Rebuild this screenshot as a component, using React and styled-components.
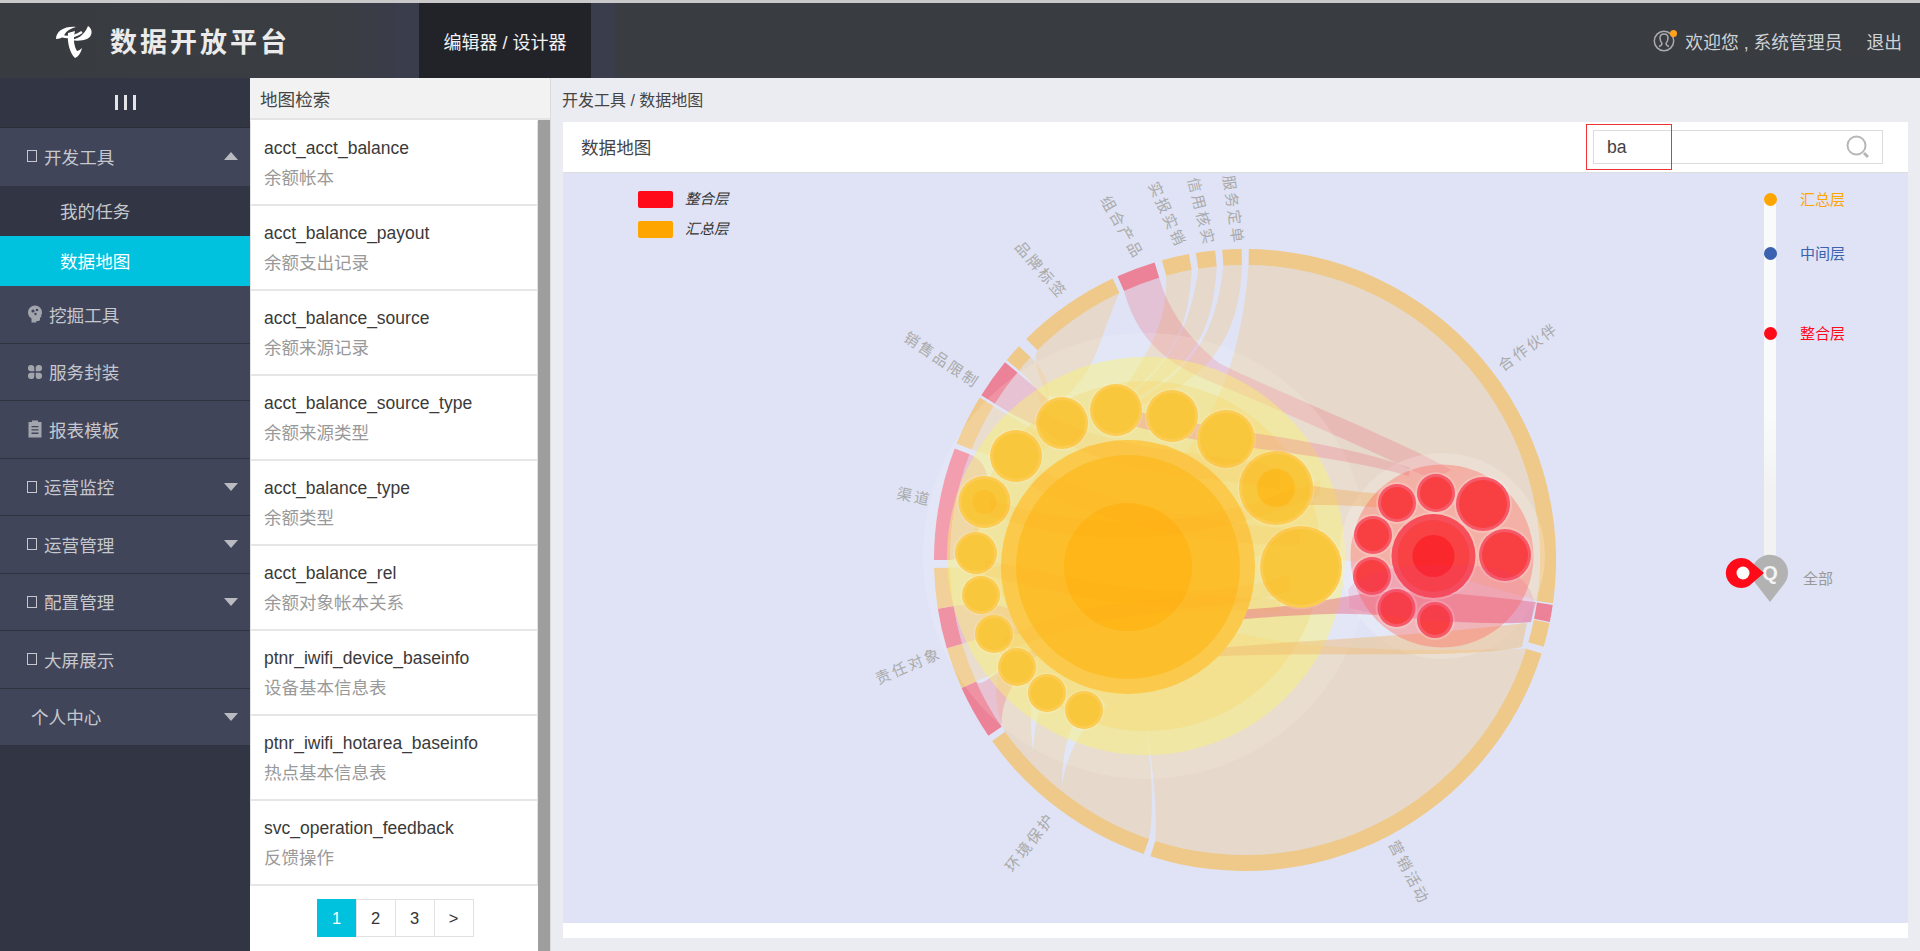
import React from "react";
import styled, { createGlobalStyle } from "styled-components";

const FONT = `"Liberation Sans", "Noto Sans CJK SC", sans-serif`;

const GlobalStyle = createGlobalStyle`
  html, body {
    margin: 0;
    height: 100%;
    overflow: hidden;
    font-family: ${FONT};
  }
  * { box-sizing: border-box; }
`;

const NAV = [
  { label: "挖掘工具", icon: "head" },
  { label: "服务封装", icon: "clover" },
  { label: "报表模板", icon: "clipboard" },
  { label: "运营监控", icon: "box", arrow: true },
  { label: "运营管理", icon: "box", arrow: true },
  { label: "配置管理", icon: "box", arrow: true },
  { label: "大屏展示", icon: "box" },
  { label: "个人中心", arrow: true },
];

const TABLES = [
  ["acct_acct_balance", "余额帐本"],
  ["acct_balance_payout", "余额支出记录"],
  ["acct_balance_source", "余额来源记录"],
  ["acct_balance_source_type", "余额来源类型"],
  ["acct_balance_type", "余额类型"],
  ["acct_balance_rel", "余额对象帐本关系"],
  ["ptnr_iwifi_device_baseinfo", "设备基本信息表"],
  ["ptnr_iwifi_hotarea_baseinfo", "热点基本信息表"],
  ["svc_operation_feedback", "反馈操作"],
];

// chart geometry, in page coordinates (the svg viewBox starts at the chart corner)
const CX = 1245;
const CY = 560;
const R_IN = 295;
const R_OUT = 311;

const polar = (r, deg) => {
  const t = (deg * Math.PI) / 180;
  return [CX + r * Math.sin(t), CY - r * Math.cos(t)];
};
const p = (pair) => `${pair[0].toFixed(1)} ${pair[1].toFixed(1)}`;

const ringPath = (a, b) => {
  const large = b - a > 180 ? 1 : 0;
  return `M${p(polar(R_OUT, a))} A${R_OUT} ${R_OUT} 0 ${large} 1 ${p(polar(R_OUT, b))} L${p(polar(R_IN, b))} A${R_IN} ${R_IN} 0 ${large} 0 ${p(polar(R_IN, a))} Z`;
};

const ribbon = (a, b, tx, ty, w = 6, k = 0.5) =>
  `M${p(polar(R_IN, a))} A${R_IN} ${R_IN} 0 0 1 ${p(polar(R_IN, b))} Q${p(polar(R_IN * k, b))} ${tx} ${ty + w / 2} L${tx} ${ty - w / 2} Q${p(polar(R_IN * k, a))} ${p(polar(R_IN, a))} Z`;

const O = "#efc98a";
const R = "#ec8297";
const RING = [
  [0.7, 98, O], [98.3, 101.5, R], [101.7, 106.2, O], [107.5, 197.7, O],
  [199, 234.4, O], [235.6, 245.7, R], [245.7, 253.5, O], [253.5, 261, R],
  [261, 268.5, O], [270, 291, "#f090a4"], [292, 301.5, O], [302, 309.5, R],
  [310, 313.4, O], [315.3, 334.8, O], [335.8, 343.1, R], [344.5, 349.6, O],
  [350.9, 354.5, O], [355.8, 359.4, O],
];

const TAN = "rgba(239,201,138,0.4)";
const PINK = "rgba(238,106,133,0.35)";

const CHORDS = [
  [`M${p(polar(R_IN, 0.7))} A${R_IN} ${R_IN} 0 0 1 ${p(polar(R_IN, 98))} C1450 572 1330 545 1150 560 L1130 530 C1195 440 1238 400 ${p(polar(R_IN, 0.7))} Z`, TAN],
  [`M${p(polar(R_IN, 107.5))} A${R_IN} ${R_IN} 0 0 1 ${p(polar(R_IN, 197.7))} C1159 795 1146 720 1128 600 L1150 590 C1200 640 1310 655 ${p(polar(R_IN, 107.5))} Z`, TAN],
  [`M${p(polar(R_IN, 199))} A${R_IN} ${R_IN} 0 0 1 ${p(polar(R_IN, 234.4))} C985 690 1000 640 1040 610 L1128 590 C1144 700 1158 790 ${p(polar(R_IN, 199))} Z`, TAN],
  [ribbon(245.7, 253.5, 1010, 640, 10), TAN],
  [ribbon(261, 268.5, 1000, 570, 10), TAN],
  [ribbon(292, 301.5, 1062, 440, 10, 0.8), TAN],
  [ribbon(310, 313.4, 1016, 456, 6, 0.8), TAN],
  [`M${p(polar(R_IN, 315.3))} A${R_IN} ${R_IN} 0 0 1 ${p(polar(R_IN, 334.8))} C1098 340 1098 370 1062 400 L1048 395 C1040 380 1032 360 ${p(polar(R_IN, 315.3))} Z`, TAN],
  [`M${p(polar(R_IN, 344.5))} A${R_IN} ${R_IN} 0 0 1 ${p(polar(R_IN, 349.6))} C1188 330 1175 360 1110 410 C1155 345 1167 320 ${p(polar(R_IN, 344.5))} Z`, TAN],
  [`M${p(polar(R_IN, 350.9))} A${R_IN} ${R_IN} 0 0 1 ${p(polar(R_IN, 354.5))} C1212 340 1190 370 1115 410 C1170 365 1190 330 ${p(polar(R_IN, 350.9))} Z`, TAN],
  [`M${p(polar(R_IN, 355.8))} A${R_IN} ${R_IN} 0 0 1 ${p(polar(R_IN, 359.4))} C1240 330 1215 385 1120 412 C1185 375 1215 345 ${p(polar(R_IN, 355.8))} Z`, TAN],
  [ribbon(270, 291, 985, 505, 24, 0.9), PINK],
  [ribbon(253.5, 261, 1040, 660, 6, 0.7), PINK],
  [`M${p(polar(R_IN, 235.6))} A${R_IN} ${R_IN} 0 0 1 ${p(polar(R_IN, 245.7))} C985 690 1000 660 1090 620 C1030 650 1000 690 ${p(polar(R_IN, 235.6))} Z`, PINK],
  [ribbon(302, 309.5, 1062, 425, 8, 0.75), PINK],
  [`M${p(polar(R_IN, 335.8))} A${R_IN} ${R_IN} 0 0 1 ${p(polar(R_IN, 343.1))} C1168 310 1190 340 1219 363 C1260 385 1400 440 1451 470 L1433 480 C1380 455 1280 410 1224 387 C1180 370 1140 350 ${p(polar(R_IN, 335.8))} Z`, "rgba(238,106,133,0.28)"],
];

const SLITS = [
  "M1033 752 C1030 725 1030 700 1036 680 L1046 690 C1036 715 1034 735 1033 752 Z",
  "M1062 785 C1062 745 1072 715 1096 695 L1108 705 C1082 725 1068 750 1062 785 Z",
];

const SMALL = [
  [1062, 423, 26], [1116, 410, 26], [1172, 416, 26], [1226, 439, 29], [1276, 488, 37],
  [1301, 567, 41], [1016, 456, 26], [984.5, 502, 26], [976, 553, 21], [981, 595, 19],
  [994, 634, 19], [1017, 667, 19], [1047, 693, 19], [1084, 710, 19],
];

const REDS = [
  [1436, 493, 19], [1397, 503, 19], [1483, 504, 27], [1505, 555, 26],
  [1373, 535, 19], [1372, 576, 19], [1396.5, 608, 19], [1435, 620, 18],
];

// thin ribbons between the two groups, hidden behind the circles at their ends
const BANDS_UNDER = [
  ["M1116 405 C1190 430 1320 435 1410 468 L1409 476 C1310 448 1190 448 1116 420 Z", "rgba(238,106,133,0.28)"],
  ["M1290 482 C1335 490 1360 492 1385 494 L1385 508 C1350 505 1330 505 1290 505 Z", "rgba(240,170,90,0.4)"],
  ["M1527 623 L1522 647 C1450 660 1340 650 1200 657 L1120 665 C1200 640 1340 645 1527 623 Z", "rgba(240,185,110,0.45)"],
  ["M1536 602 L1531 622 C1460 628 1400 612 1330 614 C1290 615 1260 618 1200 622 L1200 610 C1290 612 1340 595 1380 592 C1430 590 1480 596 1536 602 Z", "rgba(232,90,125,0.42)"],
];

// streaks that cross the yellow circles
const BANDS_OVER = [
  ["M1320 480 C1220 520 1120 540 990 500 L990 515 C1120 560 1230 530 1320 495 Z", "rgba(250,165,25,0.09)"],
  ["M1290 575 C1180 610 1090 580 985 560 L985 575 C1090 600 1190 625 1290 590 Z", "rgba(250,165,25,0.09)"],
  ["M1300 530 C1180 520 1100 500 1040 470 L1030 485 C1100 520 1180 545 1300 545 Z", "rgba(250,165,25,0.08)"],
  ["M1000 640 C1080 600 1180 590 1280 600 L1280 612 C1180 605 1090 615 1010 650 Z", "rgba(250,165,25,0.08)"],
  ["M1040 410 C1120 460 1240 450 1280 470 L1280 490 C1220 475 1110 480 1036 425 Z", "rgba(250,165,25,0.08)"],
];

const LABELS = [
  ["服务定单", 1232, 210, 82],
  ["信用核实", 1200, 212, 76],
  ["实报实销", 1166, 215, 66],
  ["组合产品", 1121, 228, 60],
  ["品牌标签", 1040, 271, 49],
  ["销售品限制", 941, 361, 34],
  ["渠道", 914, 498, 12],
  ["责任对象", 909, 667, -23],
  ["环境保护", 1031, 843, -52],
  ["营销活动", 1408, 873, 62],
  ["合作伙伴", 1529, 348, -36],
];

const STOPS = [
  { label: "汇总层", color: "#ffa500", top: 0 },
  { label: "中间层", color: "#3a62b0", top: 54 },
  { label: "整合层", color: "#ff0a19", top: 134 },
];

const NavIcon = ({ kind }) => {
  if (kind === "box") return <Tofu />;
  if (kind === "head") {
    return (
      <IconSvg viewBox="0 0 16 18">
        <path d="M8 0.5a7 7 0 0 1 7 7c0 1.4-.3 2-1 3l.6 1.5-1.6.6v2a1.3 1.3 0 0 1-1.3 1.3H9.4V17.5H4.5v-4C2.300 12 1 10 1 7.500a7 7 0 0 1 7-7z" fill="#a3a5ad" />
        <circle cx="6" cy="6" r="1.600" fill="#41455a" />
        <circle cx="10" cy="5" r="1.300" fill="#41455a" />
        <circle cx="8.500" cy="9" r="1.200" fill="#41455a" />
      </IconSvg>
    );
  }
  if (kind === "clover") {
    return (
      <IconSvg viewBox="0 0 16 16">
        <path d="M7.300 7.300H3.800a3.200 3.200 0 1 1 3.500-3.500zM8.700 7.300V3.800a3.200 3.200 0 1 1 3.500 3.500zM7.300 8.700v3.500a3.200 3.200 0 1 1-3.500-3.500zM8.700 8.700h3.500a3.200 3.200 0 1 1-3.500 3.500z" fill="#a3a5ad" />
      </IconSvg>
    );
  }
  return (
    <IconSvg viewBox="0 0 16 18">
      <path d="M1.500 2H5V0.500h6V2h3.500v15.500h-13zM4.500 6v1.300h7V6zM4.500 9.300v1.300h7V9.300zM4.500 12.600v1.300h7v-1.300z" fill="#a3a5ad" fillRule="evenodd" />
    </IconSvg>
  );
};

const DataMap = () => (
  <MapSvg viewBox="563 173 1345 750">
    {CHORDS.map(([d, fill], i) => (
      <path key={i} d={d} fill={fill} />
    ))}
    {SLITS.map((d, i) => (
      <path key={i} d={d} fill="#dfe3f5" />
    ))}
    {RING.map(([a, b, fill], i) => (
      <path key={i} d={ringPath(a, b)} fill={fill} />
    ))}

    <circle cx="1146" cy="556" r="223" fill="rgba(255,255,255,0.13)" />
    <circle cx="1146" cy="556" r="199" fill="rgba(250,245,110,0.45)" />
    <circle cx="1146" cy="556" r="175" fill="rgba(250,205,70,0.22)" />
    <circle cx="1442" cy="556" r="103" fill="rgba(255,255,255,0.2)" />
    {BANDS_UNDER.map(([d, fill], i) => (
      <path key={i} d={d} fill={fill} />
    ))}
    <circle cx="1128" cy="567" r="127" fill="#fbc94b" />
    <circle cx="1128" cy="567" r="112" fill="#fdbe2c" />
    <circle cx="1128" cy="567" r="64" fill="#feb618" />
    {SMALL.map(([cx, cy, r], i) => (
      <g key={i}>
        <circle cx={cx} cy={cy} r={r + 1.500} fill="rgba(255,255,255,0.14)" />
        <circle cx={cx} cy={cy} r={r} fill="#fbcb52" />
        <circle cx={cx} cy={cy} r={r - 3} fill="#f9c73c" />
      </g>
    ))}
    <circle cx="1276" cy="488" r="19" fill="#fcbc22" />
    <circle cx="984.500" cy="502" r="12" fill="#fbc02e" />
    {BANDS_OVER.map(([d, fill], i) => (
      <path key={i} d={d} fill={fill} />
    ))}

    <circle cx="1442" cy="556" r="91.500" fill="rgba(254,104,92,0.4)" />
    {REDS.map(([cx, cy, r], i) => (
      <g key={i}>
        <circle cx={cx} cy={cy} r={r + 2} fill="rgba(255,255,255,0.2)" />
        <circle cx={cx} cy={cy} r={r} fill="#f65a68" />
        <circle cx={cx} cy={cy} r={r - 3} fill="#f84043" />
      </g>
    ))}
    <circle cx="1433.500" cy="556" r="44" fill="rgba(255,255,255,0.2)" />
    <circle cx="1433.500" cy="556" r="42" fill="#f64f5a" />
    <circle cx="1433.500" cy="556" r="36" fill="#f84244" />
    <circle cx="1433.500" cy="556" r="21" fill="#fa272c" />
    <path d="M1534 600 C1525 570 1500 565 1440 565 C1400 565 1360 570 1348 590 L1350 608 C1400 622 1480 625 1531 622 Z" fill="rgba(240,50,130,0.12)" />

    {LABELS.map(([text, x, y, rot]) => (
      <MapLabel key={text} x={x} y={y} textAnchor="middle" dominantBaseline="middle" transform={`rotate(${rot} ${x} ${y})`}>
        {text}
      </MapLabel>
    ))}
  </MapSvg>
);

const App = () => (
  <Page>
    <GlobalStyle />
    <Header>
      <LogoBlock>
        <LogoMark viewBox="0 0 70 50">
          <g fill="#fff">
            <path d="M16 23C16 15 25 10 36 11C29 13 25 16 24 20C22 22 19 23 16 23Z" />
            <path d="M48 10C53 13 53 20 47 23C42 25 36 25 31 24C37 23 44 20 48 10Z" />
            <path d="M28 17C27 27 30 37 35 42C38 41 41 37 42 32C40 34 38 35 37 35C34 30 33 23 35 15Z" />
          </g>
          <path d="M22 20C28 22 36 20 42 16" fill="none" stroke="#fff" strokeWidth="2.500" />
        </LogoMark>
        <LogoText>数据开放平台</LogoText>
      </LogoBlock>
      <HeaderGap />
      <HeaderTab>编辑器 / 设计器</HeaderTab>
      <HeaderGap />
      <UserArea>
        <UserIcon>
          <svg width="22" height="22" viewBox="0 0 22 22" fill="none" stroke="#a9abb0" strokeWidth="1.500">
            <circle cx="11" cy="11" r="9.700" />
            <path d="M6 16.500c2-.8 3-1.500 3-3-1.500-2-2-3.500-2-5.500 0-2.500 1.800-4 4-4s4 1.500 4 4c0 2-.5 3.500-2 5.500 0 1.500 1 2.200 3 3" />
          </svg>
          <UserDot />
        </UserIcon>
        <UserText>欢迎您 , 系统管理员</UserText>
        <Logout>退出</Logout>
      </UserArea>
    </Header>

    <Body>
      <Sidebar>
        <CollapseRow>
          <Bars>
            <i />
            <i />
            <i />
          </Bars>
        </CollapseRow>
        <NavItem $open>
          <NavIcon kind="box" />
          <NavLabel>开发工具</NavLabel>
          <UpArrow />
        </NavItem>
        <SubItem>我的任务</SubItem>
        <SubItem $active>数据地图</SubItem>
        {NAV.map((item) => (
          <NavItem key={item.label}>
            {item.icon ? <NavIcon kind={item.icon} /> : <NavIndent />}
            <NavLabel>{item.label}</NavLabel>
            {item.arrow && <DownArrow />}
          </NavItem>
        ))}
      </Sidebar>

      <ListPanel>
        <PanelTitle>地图检索</PanelTitle>
        <ListScroll>
          <ListColumn>
            {TABLES.map(([name, desc]) => (
              <TableRow key={name}>
                <TableName>{name}</TableName>
                <TableDesc>{desc}</TableDesc>
              </TableRow>
            ))}
            <Pager>
              <PageBtn $active>1</PageBtn>
              <PageBtn>2</PageBtn>
              <PageBtn>3</PageBtn>
              <PageBtn>&gt;</PageBtn>
            </Pager>
          </ListColumn>
          <ScrollThumb />
        </ListScroll>
      </ListPanel>

      <Main>
        <Crumbs>开发工具 / 数据地图</Crumbs>
        <Card>
          <CardHead>
            <CardTitle>数据地图</CardTitle>
            <SearchBox>
              <SearchInput defaultValue="ba" />
              <svg width="24" height="24" viewBox="0 0 24 24" fill="none" stroke="#b5b7b9">
                <circle cx="10.500" cy="10.500" r="9" strokeWidth="2" />
                <path d="M18 18l4 4" strokeWidth="3" />
              </svg>
              <Highlight />
            </SearchBox>
          </CardHead>
          <Chart>
            <DataMap />
            <Legend>
              <LegendRow>
                <Swatch $color="#ff0a19" />
                <LegendText>整合层</LegendText>
              </LegendRow>
              <LegendRow>
                <Swatch $color="#ffa500" />
                <LegendText>汇总层</LegendText>
              </LegendRow>
            </Legend>
            <Timeline>
              {STOPS.map((s) => (
                <Stop key={s.label} $top={s.top}>
                  <StopDot $color={s.color} />
                  <StopLabel $color={s.color}>{s.label}</StopLabel>
                </Stop>
              ))}
              <PinSvg width="70" height="52" viewBox="0 0 70 52">
                <path d="M48 50L34 32A18 18 0 1 1 62 32Z" fill="#b3b2b2" />
                <PinLetter x="48" y="28" textAnchor="middle">Q</PinLetter>
                <path d="M42 21L27 8A15.500 15 0 1 0 27 34Z" fill="#ff0a19" />
                <circle cx="21" cy="21" r="6.500" fill="#fbfbfb" />
              </PinSvg>
              <AllLabel>全部</AllLabel>
            </Timeline>
          </Chart>
        </Card>
      </Main>
    </Body>
  </Page>
);

export default App;

const Page = styled.div`
  display: flex;
  flex-direction: column;
  height: 100vh;
  border-top: 3px solid #c9c9c9;
`;

const Header = styled.header`
  display: flex;
  height: 75px;
  flex: none;
  background: #393c41;
`;

const LogoBlock = styled.div`
  display: flex;
  align-items: center;
  width: 395px;
  padding-left: 40px;
  background: linear-gradient(90deg, #383b40, #3a3d42 85%, #3a3d49);
`;

const LogoMark = styled.svg`
  width: 70px;
  height: 50px;
`;

const LogoText = styled.div`
  color: #ebebeb;
  font-size: 27px;
  font-weight: 700;
  letter-spacing: 3px;
`;

const HeaderGap = styled.div`
  width: 24px;
  background: #3a3d4b;
`;

const HeaderTab = styled.div`
  display: flex;
  align-items: center;
  justify-content: center;
  width: 172px;
  background: #222329;
  color: #f2f2f2;
  font-size: 18px;
`;

const UserArea = styled.div`
  display: flex;
  flex: 1;
  align-items: center;
  justify-content: flex-end;
  padding-right: 18px;
  color: #d0d2d6;
  font-size: 17.8px;
`;

const UserIcon = styled.span`
  position: relative;
  display: flex;
  margin-right: 10px;
`;

const UserDot = styled.span`
  position: absolute;
  top: 0;
  right: -2px;
  width: 7px;
  height: 7px;
  border-radius: 50%;
  background: #ffa21a;
`;

const UserText = styled.span``;

const Logout = styled.span`
  margin-left: 24px;
`;

const Body = styled.div`
  display: flex;
  flex: 1;
  min-height: 0;
`;

const Sidebar = styled.aside`
  flex: none;
  width: 250px;
  background: #323543;
  color: #c6c8cd;
  font-size: 17.6px;
`;

const CollapseRow = styled.div`
  display: flex;
  align-items: center;
  justify-content: center;
  height: 50px;
  border-bottom: 1px solid #2a2c36;
`;

const Bars = styled.div`
  display: flex;
  gap: 6px;
  i {
    width: 3px;
    height: 15px;
    background: #e4e4e6;
  }
`;

const NavItem = styled.div`
  display: flex;
  align-items: center;
  height: ${(props) => (props.$open ? "58px" : "57.5px")};
  padding-left: 27px;
  padding-bottom: ${(props) => (props.$open ? "2px" : "0")};
  background: #41455a;
  border-bottom: ${(props) => (props.$open ? "none" : "1px solid #30333f")};
`;

const NavIndent = styled.span`
  width: 4px;
`;

const Tofu = styled.span`
  width: 10px;
  height: 12px;
  margin-right: 7px;
  border: 1px solid #c6c8cd;
`;

const IconSvg = styled.svg`
  width: 16px;
  height: 18px;
  margin-right: 6px;
`;

const NavLabel = styled.span`
  flex: 1;
`;

const UpArrow = styled.span`
  width: 0;
  height: 0;
  margin-right: 12px;
  border-left: 7.5px solid transparent;
  border-right: 7.5px solid transparent;
  border-bottom: 8px solid #b9bbc0;
`;

const DownArrow = styled.span`
  width: 0;
  height: 0;
  margin-right: 12px;
  border-left: 7.5px solid transparent;
  border-right: 7.5px solid transparent;
  border-top: 8px solid #b9bbc0;
`;

const SubItem = styled.div`
  display: flex;
  align-items: center;
  height: 50px;
  padding: 0 0 2px 60px;
  background: ${(props) => (props.$active ? "#00c1de" : "#323543")};
  color: ${(props) => (props.$active ? "#fff" : "#c6c8cd")};
`;

const ListPanel = styled.section`
  display: flex;
  flex: none;
  flex-direction: column;
  width: 301px;
  border-right: 1px solid #dcdcdc;
  background: #fff;
`;

const PanelTitle = styled.div`
  display: flex;
  align-items: center;
  flex: none;
  height: 42px;
  padding-left: 10px;
  background: #f2f2f2;
  border-bottom: 2px solid #e4e4e4;
  color: #444;
  font-size: 17.6px;
`;

const ListScroll = styled.div`
  display: flex;
  flex: 1;
  min-height: 0;
`;

const ListColumn = styled.div`
  flex: 1;
  padding-top: 1px;
`;

const ScrollThumb = styled.div`
  width: 12px;
  background: #9e9e9e;
`;

const TableRow = styled.div`
  height: 85px;
  padding: 12px 0 0 13px;
  border-left: 1px solid #e2e2e2;
  border-right: 1px solid #e2e2e2;
  border-bottom: 2px solid #e6e6e6;
  font-size: 17.5px;
  line-height: 30px;
`;

const TableName = styled.div`
  color: #3a3a3a;
`;

const TableDesc = styled.div`
  color: #999;
`;

const Pager = styled.div`
  display: flex;
  justify-content: center;
  margin-top: 13px;
  padding-left: 3px;
`;

const PageBtn = styled.div`
  display: flex;
  align-items: center;
  justify-content: center;
  width: 40px;
  height: 38px;
  margin-left: -1px;
  background: ${(props) => (props.$active ? "#00c1de" : "#fff")};
  border: 1px solid ${(props) => (props.$active ? "#00c1de" : "#e2e2e2")};
  color: ${(props) => (props.$active ? "#fff" : "#333")};
  font-size: 16.5px;
`;

const Main = styled.main`
  display: flex;
  flex: 1;
  flex-direction: column;
  min-width: 0;
  padding: 0 12px 13px;
  background: #ebecf1;
`;

const Crumbs = styled.div`
  display: flex;
  align-items: center;
  flex: none;
  height: 44px;
  padding-bottom: 2px;
  margin-left: -1px;
  color: #444;
  font-size: 16px;
`;

const Card = styled.div`
  display: flex;
  flex: 1;
  flex-direction: column;
  min-height: 0;
  padding-bottom: 15px;
  background: #fff;
`;

const CardHead = styled.div`
  display: flex;
  align-items: center;
  justify-content: space-between;
  flex: none;
  height: 51px;
  padding: 0 25px 0 18px;
  border-bottom: 1px solid #dedede;
`;

const CardTitle = styled.div`
  padding-bottom: 2px;
  color: #444;
  font-size: 17.6px;
`;

const SearchBox = styled.div`
  position: relative;
  display: flex;
  align-items: center;
  width: 290px;
  height: 34px;
  padding: 0 12px 0 13px;
  border: 1px solid #dcdcdc;
`;

const SearchInput = styled.input`
  flex: 1;
  min-width: 0;
  border: none;
  outline: none;
  padding: 0;
  background: transparent;
  color: #444;
  font-family: ${FONT};
  font-size: 17.6px;
`;

const Highlight = styled.div`
  position: absolute;
  top: -7px;
  left: -8px;
  width: 86px;
  height: 46px;
  border: 1px solid #ee3333;
  pointer-events: none;
`;

const Chart = styled.div`
  position: relative;
  flex: 1;
  min-height: 0;
  overflow: hidden;
  background: #dfe3f5;
`;

const MapSvg = styled.svg`
  display: block;
  width: 100%;
  height: 100%;
`;

const MapLabel = styled.text`
  fill: #aaa;
  font-family: "Noto Sans CJK SC", sans-serif;
  font-size: 15px;
  letter-spacing: 2.5px;
`;

const Legend = styled.div`
  position: absolute;
  top: 18px;
  left: 75px;
  display: flex;
  flex-direction: column;
  gap: 13px;
`;

const LegendRow = styled.div`
  display: flex;
  align-items: center;
  gap: 12px;
  height: 17px;
`;

const Swatch = styled.span`
  width: 35px;
  height: 17px;
  border-radius: 2px;
  background: ${(props) => props.$color};
`;

const LegendText = styled.span`
  color: #333;
  font-size: 14.5px;
  line-height: 17px;
  font-style: italic;
`;

const Timeline = styled.div`
  position: absolute;
  top: 26px;
  left: 1201px;
  width: 12px;
  height: 362px;
  background: linear-gradient(180deg, #f9fbfb 60%, #f2f2f2 80%);
`;

const Stop = styled.div`
  position: absolute;
  top: ${(props) => props.$top}px;
  left: 0;
`;

const StopDot = styled.span`
  position: absolute;
  top: -6.5px;
  left: -0.5px;
  width: 13px;
  height: 13px;
  border-radius: 50%;
  background: ${(props) => props.$color};
`;

const StopLabel = styled.span`
  position: absolute;
  top: -9px;
  left: 36px;
  color: ${(props) => props.$color};
  font-size: 15px;
  line-height: 20px;
  white-space: nowrap;
`;

const PinSvg = styled.svg`
  position: absolute;
  top: 353px;
  left: -42px;
`;

const PinLetter = styled.text`
  fill: #f4f4f4;
  font-family: ${FONT};
  font-size: 20px;
  font-weight: 700;
`;

const AllLabel = styled.span`
  position: absolute;
  top: 370px;
  left: 39px;
  color: #999;
  font-size: 15px;
  line-height: 20px;
  white-space: nowrap;
`;
